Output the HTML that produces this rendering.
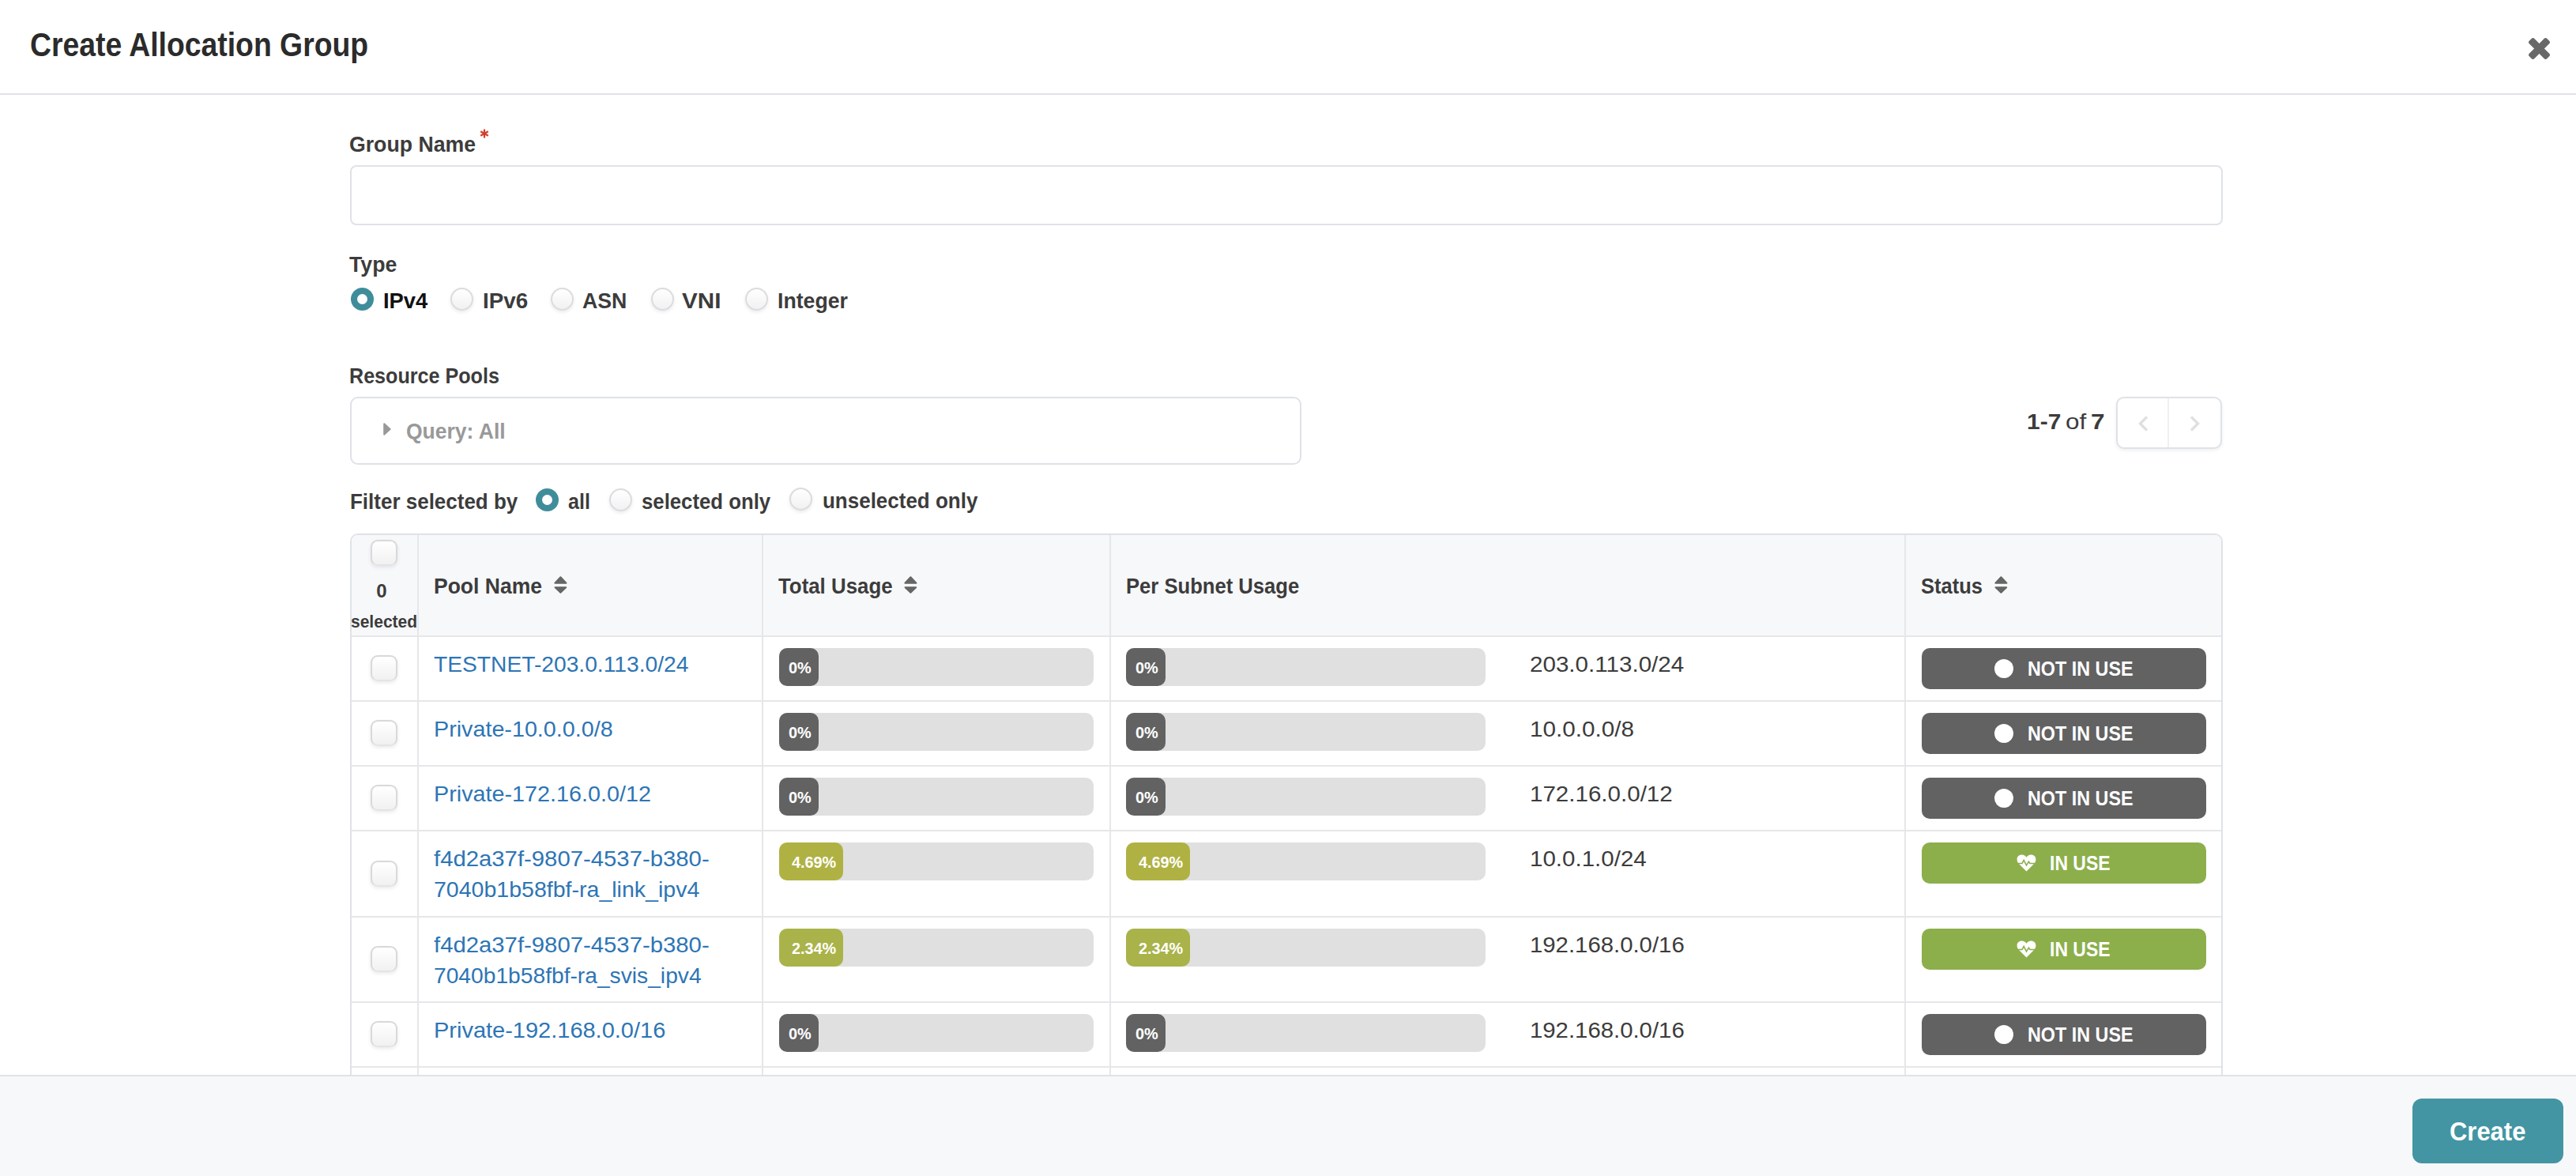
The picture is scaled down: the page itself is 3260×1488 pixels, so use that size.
<!DOCTYPE html>
<html><head><meta charset="utf-8"><title>Create Allocation Group</title>
<style>
html,body{margin:0;padding:0}
body{width:3260px;height:1488px;background:#fff;font-family:"Liberation Sans",sans-serif}
#root{position:relative;width:3260px;height:1488px;overflow:hidden;background:#fff}
.t{position:absolute;line-height:1;white-space:nowrap}
.r{position:absolute}
</style></head><body><div id="root">
<div id="t0" class="t" style="left:38.00px;top:35.20px;font-size:43px;font-weight:700;color:#2b2b2b;transform-origin:0 0;transform:scaleX(0.8684);">Create Allocation Group</div>
<svg class="r" style="left:3199.5px;top:47.5px" width="27" height="27" viewBox="0 0 27 27"><g fill="#686868" transform="rotate(45 13.5 13.5)"><rect x="-2.3" y="9" width="31.6" height="9" rx="2.4"/><rect x="9" y="-2.3" width="9" height="31.6" rx="2.4"/></g></svg>
<div class="r" style="left:0px;top:118px;width:3260px;height:2px;background:#dfe2e7"></div>
<div id="t1" class="t" style="left:442.00px;top:169.10px;font-size:28px;font-weight:700;color:#3c3c3c;transform-origin:0 0;transform:scaleX(0.9522);">Group Name</div>
<svg class="r" style="left:607px;top:163px" width="12" height="12" viewBox="0 0 12 12"><g stroke="#d23f2c" stroke-width="2.2" stroke-linecap="butt"><path d="M6 0.5 V11.5"/><path d="M1.2 3.2 L10.8 8.8"/><path d="M10.8 3.2 L1.2 8.8"/></g></svg>
<div class="r" style="left:443px;top:209px;width:2370px;height:76px;box-sizing:border-box;border:2px solid #dfe2e7;border-radius:8px;background:#fff"></div>
<div id="t2" class="t" style="left:442.25px;top:320.85px;font-size:28px;font-weight:700;color:#3c3c3c;transform-origin:0 0;transform:scaleX(0.9529);">Type</div>
<div class="r" style="left:443.5px;top:363.8px;width:29px;height:29px;border-radius:50%;background:#3f8d9b"></div>
<div class="r" style="left:451.5px;top:371.8px;width:13px;height:13px;border-radius:50%;background:#fff"></div>
<div id="t3" class="t" style="left:484.50px;top:366.60px;font-size:28px;font-weight:700;color:#111;transform-origin:0 0;transform:scaleX(0.9776);">IPv4</div>
<div class="r" style="left:569.5px;top:363.8px;width:29px;height:29px;box-sizing:border-box;border-radius:50%;border:2px solid #dcdcdc;background:linear-gradient(#fff,#f1f1f3);box-shadow:0 2px 4px rgba(40,50,80,0.10)"></div>
<div id="t4" class="t" style="left:611.00px;top:366.60px;font-size:28px;font-weight:700;color:#3c3c3c;transform-origin:0 0;transform:scaleX(0.9906);">IPv6</div>
<div class="r" style="left:696.5px;top:363.8px;width:29px;height:29px;box-sizing:border-box;border-radius:50%;border:2px solid #dcdcdc;background:linear-gradient(#fff,#f1f1f3);box-shadow:0 2px 4px rgba(40,50,80,0.10)"></div>
<div id="t5" class="t" style="left:737.25px;top:366.60px;font-size:28px;font-weight:700;color:#3c3c3c;transform-origin:0 0;transform:scaleX(0.9543);">ASN</div>
<div class="r" style="left:823.5px;top:363.8px;width:29px;height:29px;box-sizing:border-box;border-radius:50%;border:2px solid #dcdcdc;background:linear-gradient(#fff,#f1f1f3);box-shadow:0 2px 4px rgba(40,50,80,0.10)"></div>
<div id="t6" class="t" style="left:863.00px;top:366.60px;font-size:28px;font-weight:700;color:#3c3c3c;transform-origin:0 0;transform:scaleX(1.058);">VNI</div>
<div class="r" style="left:942.5px;top:363.8px;width:29px;height:29px;box-sizing:border-box;border-radius:50%;border:2px solid #dcdcdc;background:linear-gradient(#fff,#f1f1f3);box-shadow:0 2px 4px rgba(40,50,80,0.10)"></div>
<div id="t7" class="t" style="left:984.20px;top:366.80px;font-size:28px;font-weight:700;color:#3c3c3c;transform-origin:0 0;transform:scaleX(0.9518);">Integer</div>
<div id="t8" class="t" style="left:442.25px;top:462.10px;font-size:28px;font-weight:700;color:#3c3c3c;transform-origin:0 0;transform:scaleX(0.8974);">Resource Pools</div>
<div class="r" style="left:443px;top:502px;width:1204px;height:86px;box-sizing:border-box;border:2px solid #dfe2e7;border-radius:10px;background:#fff"></div>
<svg class="r" style="left:485px;top:535px" width="10" height="16" viewBox="0 0 10 16"><path d="M1.2 1.2 L8.6 8 L1.2 14.8 Z" fill="#999" stroke="#999" stroke-width="2" stroke-linejoin="round"/></svg>
<div id="t9" class="t" style="left:514.25px;top:532.10px;font-size:28px;font-weight:700;color:#999;transform-origin:0 0;transform:scaleX(0.9464);">Query: All</div>
<div id="t10" class="t" style="left:2564.75px;top:520.10px;font-size:28px;font-weight:700;color:#3c3c3c;transform-origin:0 0;transform:scaleX(1.0695);">1-7</div>
<div id="t11" class="t" style="left:2614.10px;top:520.10px;font-size:28px;font-weight:400;color:#3c3c3c;transform-origin:0 0;transform:scaleX(1.1253);">of</div>
<div id="t12" class="t" style="left:2646.25px;top:520.10px;font-size:28px;font-weight:700;color:#3c3c3c;transform-origin:0 0;transform:scaleX(1.125);">7</div>
<div class="r" style="left:2678px;top:502px;width:134px;height:66px;box-sizing:border-box;border:2px solid #dfe2e7;border-radius:10px;background:#fff;box-shadow:0 2px 4px rgba(40,50,80,0.08)"></div>
<div class="r" style="left:2743px;top:504px;width:2px;height:62px;background:#f0f0f0"></div>
<svg class="r" style="left:2703px;top:524px" width="18" height="24" viewBox="0 0 18 24"><path d="M14 3.5 L5.5 12 L14 20.5" fill="none" stroke="#e0e0e0" stroke-width="3.4" stroke-linecap="butt" stroke-linejoin="miter"/></svg>
<svg class="r" style="left:2769px;top:524px" width="18" height="24" viewBox="0 0 18 24"><path d="M4 3.5 L12.5 12 L4 20.5" fill="none" stroke="#e0e0e0" stroke-width="3.4" stroke-linecap="butt" stroke-linejoin="miter"/></svg>
<div id="t13" class="t" style="left:442.75px;top:620.85px;font-size:28px;font-weight:700;color:#3c3c3c;transform-origin:0 0;transform:scaleX(0.928);">Filter selected by</div>
<div class="r" style="left:678.25px;top:617.5px;width:29px;height:29px;border-radius:50%;background:#3f8d9b"></div>
<div class="r" style="left:686.25px;top:625.5px;width:13px;height:13px;border-radius:50%;background:#fff"></div>
<div id="t14" class="t" style="left:719.25px;top:620.60px;font-size:28px;font-weight:700;color:#3c3c3c;transform-origin:0 0;transform:scaleX(0.8943);">all</div>
<div class="r" style="left:770.75px;top:617.5px;width:29px;height:29px;box-sizing:border-box;border-radius:50%;border:2px solid #dcdcdc;background:linear-gradient(#fff,#f1f1f3);box-shadow:0 2px 4px rgba(40,50,80,0.10)"></div>
<div id="t15" class="t" style="left:811.50px;top:620.60px;font-size:28px;font-weight:700;color:#3c3c3c;transform-origin:0 0;transform:scaleX(0.9194);">selected only</div>
<div class="r" style="left:999.2px;top:617.0px;width:29px;height:29px;box-sizing:border-box;border-radius:50%;border:2px solid #dcdcdc;background:linear-gradient(#fff,#f1f1f3);box-shadow:0 2px 4px rgba(40,50,80,0.10)"></div>
<div id="t16" class="t" style="left:1040.50px;top:620.10px;font-size:28px;font-weight:700;color:#3c3c3c;transform-origin:0 0;transform:scaleX(0.9278);">unselected only</div>
<div class="r" style="left:443px;top:675px;width:2370px;height:705px;box-sizing:border-box;border:2px solid #dfe2e7;border-radius:10px 10px 0 0;background:#fff;overflow:hidden"><div style="position:absolute;left:0;top:0;right:0;height:127px;background:#f7f8fa"></div></div>
<div class="r" style="left:445px;top:804px;width:2366px;height:2px;background:#e6e7e9"></div>
<div class="r" style="left:445px;top:886px;width:2366px;height:2px;background:#e6e7e9"></div>
<div class="r" style="left:445px;top:968px;width:2366px;height:2px;background:#e6e7e9"></div>
<div class="r" style="left:445px;top:1050px;width:2366px;height:2px;background:#e6e7e9"></div>
<div class="r" style="left:445px;top:1159px;width:2366px;height:2px;background:#e6e7e9"></div>
<div class="r" style="left:445px;top:1267px;width:2366px;height:2px;background:#e6e7e9"></div>
<div class="r" style="left:445px;top:1349px;width:2366px;height:2px;background:#e6e7e9"></div>
<div class="r" style="left:527.75px;top:677px;width:2px;height:685px;background:#e6e7e9"></div>
<div class="r" style="left:964px;top:677px;width:2px;height:685px;background:#e6e7e9"></div>
<div class="r" style="left:1404px;top:677px;width:2px;height:685px;background:#e6e7e9"></div>
<div class="r" style="left:2410px;top:677px;width:2px;height:685px;background:#e6e7e9"></div>
<div class="r" style="left:469px;top:682.7px;width:34px;height:33px;box-sizing:border-box;border-radius:9px;border:2px solid #d9d9d9;border-bottom-color:#e4e4e4;background:linear-gradient(#fff,#f1f1f2);box-shadow:0 2px 4px rgba(40,50,90,0.10)"></div>
<div id="t17" class="t" style="left:476.30px;top:735.98px;font-size:24px;font-weight:700;color:#3c3c3c;">0</div>
<div id="t18" class="t" style="left:443.50px;top:777.10px;font-size:21.5px;font-weight:700;color:#3c3c3c;transform-origin:0 0;transform:scaleX(0.9774);">selected</div>
<div id="t19" class="t" style="left:549.00px;top:728.10px;font-size:28px;font-weight:700;color:#3c3c3c;transform-origin:0 0;transform:scaleX(0.9467);">Pool Name</div>
<svg class="r" style="left:700.5px;top:729px" width="17" height="22" viewBox="0 0 17 22"><path d="M1.4 8.7 L8.4 1.2 L15.4 8.7 Z M1.6 14.3 L15.2 14.3 L8.4 20.8 Z" fill="#666" stroke="#666" stroke-width="2" stroke-linejoin="round"/></svg>
<div id="t20" class="t" style="left:984.50px;top:728.10px;font-size:28px;font-weight:700;color:#3c3c3c;transform-origin:0 0;transform:scaleX(0.9228);">Total Usage</div>
<svg class="r" style="left:1143.5px;top:729px" width="17" height="22" viewBox="0 0 17 22"><path d="M1.4 8.7 L8.4 1.2 L15.4 8.7 Z M1.6 14.3 L15.2 14.3 L8.4 20.8 Z" fill="#666" stroke="#666" stroke-width="2" stroke-linejoin="round"/></svg>
<div id="t21" class="t" style="left:1424.70px;top:728.10px;font-size:28px;font-weight:700;color:#3c3c3c;transform-origin:0 0;transform:scaleX(0.9149);">Per Subnet Usage</div>
<div id="t22" class="t" style="left:2430.75px;top:728.10px;font-size:28px;font-weight:700;color:#3c3c3c;transform-origin:0 0;transform:scaleX(0.9118);">Status</div>
<svg class="r" style="left:2523.5px;top:729px" width="17" height="22" viewBox="0 0 17 22"><path d="M1.4 8.7 L8.4 1.2 L15.4 8.7 Z M1.6 14.3 L15.2 14.3 L8.4 20.8 Z" fill="#666" stroke="#666" stroke-width="2" stroke-linejoin="round"/></svg>
<div class="r" style="left:469px;top:829.0px;width:34px;height:33px;box-sizing:border-box;border-radius:9px;border:2px solid #d9d9d9;border-bottom-color:#e4e4e4;background:linear-gradient(#fff,#f1f1f2);box-shadow:0 2px 4px rgba(40,50,90,0.10)"></div>
<div id="t23" class="t" style="left:549.00px;top:827.10px;font-size:28px;font-weight:400;color:#2d75b5;transform-origin:0 0;transform:scaleX(1.007);">TESTNET-203.0.113.0/24</div>
<div class="r" style="left:986px;top:820px;width:398px;height:48px;background:#e0e0e0;border-radius:10px"></div>
<div class="r" style="left:986px;top:820px;width:50px;height:48px;background:#626262;border-radius:10px"></div>
<div id="t24" class="t" style="left:997.50px;top:834.95px;font-size:20.5px;font-weight:700;color:#fff;transform-origin:0 0;transform:scaleX(0.9694);">0%</div>
<div class="r" style="left:1425px;top:820px;width:455px;height:48px;background:#e0e0e0;border-radius:10px"></div>
<div class="r" style="left:1425px;top:820px;width:50px;height:48px;background:#626262;border-radius:10px"></div>
<div id="t25" class="t" style="left:1436.50px;top:834.95px;font-size:20.5px;font-weight:700;color:#fff;transform-origin:0 0;transform:scaleX(0.9694);">0%</div>
<div id="t26" class="t" style="left:1936.00px;top:826.70px;font-size:28px;font-weight:400;color:#3c3c3c;transform-origin:0 0;transform:scaleX(1.0568);">203.0.113.0/24</div>
<div class="r" style="left:2432px;top:820px;width:360px;height:52px;background:#626262;border-radius:10px"></div>
<div class="r" style="left:2524px;top:834px;width:24px;height:24px;background:#fff;border-radius:50%"></div>
<div id="t27" class="t" style="left:2565.50px;top:833.39px;font-size:26px;font-weight:700;color:#fff;transform-origin:0 0;transform:scaleX(0.8979);">NOT IN USE</div>
<div class="r" style="left:469px;top:911.0px;width:34px;height:33px;box-sizing:border-box;border-radius:9px;border:2px solid #d9d9d9;border-bottom-color:#e4e4e4;background:linear-gradient(#fff,#f1f1f2);box-shadow:0 2px 4px rgba(40,50,90,0.10)"></div>
<div id="t28" class="t" style="left:549.00px;top:909.10px;font-size:28px;font-weight:400;color:#2d75b5;transform-origin:0 0;transform:scaleX(1.0254);">Private-10.0.0.0/8</div>
<div class="r" style="left:986px;top:902px;width:398px;height:48px;background:#e0e0e0;border-radius:10px"></div>
<div class="r" style="left:986px;top:902px;width:50px;height:48px;background:#626262;border-radius:10px"></div>
<div id="t29" class="t" style="left:997.50px;top:916.95px;font-size:20.5px;font-weight:700;color:#fff;transform-origin:0 0;transform:scaleX(0.9694);">0%</div>
<div class="r" style="left:1425px;top:902px;width:455px;height:48px;background:#e0e0e0;border-radius:10px"></div>
<div class="r" style="left:1425px;top:902px;width:50px;height:48px;background:#626262;border-radius:10px"></div>
<div id="t30" class="t" style="left:1436.50px;top:916.95px;font-size:20.5px;font-weight:700;color:#fff;transform-origin:0 0;transform:scaleX(0.9694);">0%</div>
<div id="t31" class="t" style="left:1936.00px;top:908.70px;font-size:28px;font-weight:400;color:#3c3c3c;transform-origin:0 0;transform:scaleX(1.06);">10.0.0.0/8</div>
<div class="r" style="left:2432px;top:902px;width:360px;height:52px;background:#626262;border-radius:10px"></div>
<div class="r" style="left:2524px;top:916px;width:24px;height:24px;background:#fff;border-radius:50%"></div>
<div id="t32" class="t" style="left:2565.50px;top:915.39px;font-size:26px;font-weight:700;color:#fff;transform-origin:0 0;transform:scaleX(0.8979);">NOT IN USE</div>
<div class="r" style="left:469px;top:993.0px;width:34px;height:33px;box-sizing:border-box;border-radius:9px;border:2px solid #d9d9d9;border-bottom-color:#e4e4e4;background:linear-gradient(#fff,#f1f1f2);box-shadow:0 2px 4px rgba(40,50,90,0.10)"></div>
<div id="t33" class="t" style="left:549.00px;top:991.10px;font-size:28px;font-weight:400;color:#2d75b5;transform-origin:0 0;transform:scaleX(1.0267);">Private-172.16.0.0/12</div>
<div class="r" style="left:986px;top:984px;width:398px;height:48px;background:#e0e0e0;border-radius:10px"></div>
<div class="r" style="left:986px;top:984px;width:50px;height:48px;background:#626262;border-radius:10px"></div>
<div id="t34" class="t" style="left:997.50px;top:998.95px;font-size:20.5px;font-weight:700;color:#fff;transform-origin:0 0;transform:scaleX(0.9694);">0%</div>
<div class="r" style="left:1425px;top:984px;width:455px;height:48px;background:#e0e0e0;border-radius:10px"></div>
<div class="r" style="left:1425px;top:984px;width:50px;height:48px;background:#626262;border-radius:10px"></div>
<div id="t35" class="t" style="left:1436.50px;top:998.95px;font-size:20.5px;font-weight:700;color:#fff;transform-origin:0 0;transform:scaleX(0.9694);">0%</div>
<div id="t36" class="t" style="left:1936.00px;top:990.70px;font-size:28px;font-weight:400;color:#3c3c3c;transform-origin:0 0;transform:scaleX(1.0552);">172.16.0.0/12</div>
<div class="r" style="left:2432px;top:984px;width:360px;height:52px;background:#626262;border-radius:10px"></div>
<div class="r" style="left:2524px;top:998px;width:24px;height:24px;background:#fff;border-radius:50%"></div>
<div id="t37" class="t" style="left:2565.50px;top:997.39px;font-size:26px;font-weight:700;color:#fff;transform-origin:0 0;transform:scaleX(0.8979);">NOT IN USE</div>
<div class="r" style="left:469px;top:1088.5px;width:34px;height:33px;box-sizing:border-box;border-radius:9px;border:2px solid #d9d9d9;border-bottom-color:#e4e4e4;background:linear-gradient(#fff,#f1f1f2);box-shadow:0 2px 4px rgba(40,50,90,0.10)"></div>
<div id="t38" class="t" style="left:549.00px;top:1073.10px;font-size:28px;font-weight:400;color:#2d75b5;transform-origin:0 0;transform:scaleX(1.0465);">f4d2a37f-9807-4537-b380-</div>
<div id="t39" class="t" style="left:549.00px;top:1111.60px;font-size:28px;font-weight:400;color:#2d75b5;transform-origin:0 0;transform:scaleX(1.019);">7040b1b58fbf-ra_link_ipv4</div>
<div class="r" style="left:986px;top:1066px;width:398px;height:48px;background:#e0e0e0;border-radius:10px"></div>
<div class="r" style="left:986px;top:1066px;width:81px;height:48px;background:#afb243;border-radius:10px"></div>
<div id="t40" class="t" style="left:1001.50px;top:1080.95px;font-size:20.5px;font-weight:700;color:#fff;transform-origin:0 0;transform:scaleX(0.9672);">4.69%</div>
<div class="r" style="left:1425px;top:1066px;width:455px;height:48px;background:#e0e0e0;border-radius:10px"></div>
<div class="r" style="left:1425px;top:1066px;width:81px;height:48px;background:#afb243;border-radius:10px"></div>
<div id="t41" class="t" style="left:1440.50px;top:1080.95px;font-size:20.5px;font-weight:700;color:#fff;transform-origin:0 0;transform:scaleX(0.9672);">4.69%</div>
<div id="t42" class="t" style="left:1936.00px;top:1072.70px;font-size:28px;font-weight:400;color:#3c3c3c;transform-origin:0 0;transform:scaleX(1.0542);">10.0.1.0/24</div>
<div class="r" style="left:2432px;top:1066px;width:360px;height:52px;background:#8caf4b;border-radius:10px"></div>
<svg class="r" style="left:2552px;top:1081px" width="25" height="22" viewBox="0 0 25 22"><path d="M12.5 21.5 L3 12 C-1 8 0 1.2 6 0.6 C9 0.3 11.3 2 12.5 3.8 C13.7 2 16 0.3 19 0.6 C25 1.2 26 8 22 12 Z" fill="#fff"/><path d="M0 11.5 L7 11.5 L9.2 7.4 L12.5 13.9 L15.4 9.2 L16.9 11.5 L25 11.5" fill="none" stroke="#8caf4b" stroke-width="1.6" stroke-linejoin="miter"/></svg>
<div id="t43" class="t" style="left:2594.10px;top:1078.99px;font-size:26px;font-weight:700;color:#fff;transform-origin:0 0;transform:scaleX(0.8835);">IN USE</div>
<div class="r" style="left:469px;top:1197.0px;width:34px;height:33px;box-sizing:border-box;border-radius:9px;border:2px solid #d9d9d9;border-bottom-color:#e4e4e4;background:linear-gradient(#fff,#f1f1f2);box-shadow:0 2px 4px rgba(40,50,90,0.10)"></div>
<div id="t44" class="t" style="left:549.00px;top:1182.10px;font-size:28px;font-weight:400;color:#2d75b5;transform-origin:0 0;transform:scaleX(1.0465);">f4d2a37f-9807-4537-b380-</div>
<div id="t45" class="t" style="left:549.00px;top:1220.60px;font-size:28px;font-weight:400;color:#2d75b5;transform-origin:0 0;transform:scaleX(1.007);">7040b1b58fbf-ra_svis_ipv4</div>
<div class="r" style="left:986px;top:1175px;width:398px;height:48px;background:#e0e0e0;border-radius:10px"></div>
<div class="r" style="left:986px;top:1175px;width:81px;height:48px;background:#a9b349;border-radius:10px"></div>
<div id="t46" class="t" style="left:1001.50px;top:1189.95px;font-size:20.5px;font-weight:700;color:#fff;transform-origin:0 0;transform:scaleX(0.9672);">2.34%</div>
<div class="r" style="left:1425px;top:1175px;width:455px;height:48px;background:#e0e0e0;border-radius:10px"></div>
<div class="r" style="left:1425px;top:1175px;width:81px;height:48px;background:#a9b349;border-radius:10px"></div>
<div id="t47" class="t" style="left:1440.50px;top:1189.95px;font-size:20.5px;font-weight:700;color:#fff;transform-origin:0 0;transform:scaleX(0.9672);">2.34%</div>
<div id="t48" class="t" style="left:1936.00px;top:1181.70px;font-size:28px;font-weight:400;color:#3c3c3c;transform-origin:0 0;transform:scaleX(1.0474);">192.168.0.0/16</div>
<div class="r" style="left:2432px;top:1175px;width:360px;height:52px;background:#8caf4b;border-radius:10px"></div>
<svg class="r" style="left:2552px;top:1190px" width="25" height="22" viewBox="0 0 25 22"><path d="M12.5 21.5 L3 12 C-1 8 0 1.2 6 0.6 C9 0.3 11.3 2 12.5 3.8 C13.7 2 16 0.3 19 0.6 C25 1.2 26 8 22 12 Z" fill="#fff"/><path d="M0 11.5 L7 11.5 L9.2 7.4 L12.5 13.9 L15.4 9.2 L16.9 11.5 L25 11.5" fill="none" stroke="#8caf4b" stroke-width="1.6" stroke-linejoin="miter"/></svg>
<div id="t49" class="t" style="left:2594.10px;top:1187.99px;font-size:26px;font-weight:700;color:#fff;transform-origin:0 0;transform:scaleX(0.8835);">IN USE</div>
<div class="r" style="left:469px;top:1292.0px;width:34px;height:33px;box-sizing:border-box;border-radius:9px;border:2px solid #d9d9d9;border-bottom-color:#e4e4e4;background:linear-gradient(#fff,#f1f1f2);box-shadow:0 2px 4px rgba(40,50,90,0.10)"></div>
<div id="t50" class="t" style="left:549.00px;top:1290.10px;font-size:28px;font-weight:400;color:#2d75b5;transform-origin:0 0;transform:scaleX(1.0351);">Private-192.168.0.0/16</div>
<div class="r" style="left:986px;top:1283px;width:398px;height:48px;background:#e0e0e0;border-radius:10px"></div>
<div class="r" style="left:986px;top:1283px;width:50px;height:48px;background:#626262;border-radius:10px"></div>
<div id="t51" class="t" style="left:997.50px;top:1297.95px;font-size:20.5px;font-weight:700;color:#fff;transform-origin:0 0;transform:scaleX(0.9694);">0%</div>
<div class="r" style="left:1425px;top:1283px;width:455px;height:48px;background:#e0e0e0;border-radius:10px"></div>
<div class="r" style="left:1425px;top:1283px;width:50px;height:48px;background:#626262;border-radius:10px"></div>
<div id="t52" class="t" style="left:1436.50px;top:1297.95px;font-size:20.5px;font-weight:700;color:#fff;transform-origin:0 0;transform:scaleX(0.9694);">0%</div>
<div id="t53" class="t" style="left:1936.00px;top:1289.70px;font-size:28px;font-weight:400;color:#3c3c3c;transform-origin:0 0;transform:scaleX(1.0474);">192.168.0.0/16</div>
<div class="r" style="left:2432px;top:1283px;width:360px;height:52px;background:#626262;border-radius:10px"></div>
<div class="r" style="left:2524px;top:1297px;width:24px;height:24px;background:#fff;border-radius:50%"></div>
<div id="t54" class="t" style="left:2565.50px;top:1296.39px;font-size:26px;font-weight:700;color:#fff;transform-origin:0 0;transform:scaleX(0.8979);">NOT IN USE</div>
<div class="r" style="left:469px;top:1373.5px;width:34px;height:33px;box-sizing:border-box;border-radius:9px;border:2px solid #d9d9d9;border-bottom-color:#e4e4e4;background:linear-gradient(#fff,#f1f1f2);box-shadow:0 2px 4px rgba(40,50,90,0.10)"></div>
<div class="r" style="left:0;top:1360px;width:3260px;height:128px;background:#f7f8fa;border-top:2px solid #dfe2e7;box-sizing:border-box"></div>
<div class="r" style="left:3053px;top:1390px;width:191px;height:82px;background:#4395a3;border-radius:12px"></div>
<div id="t55" class="t" style="left:3099.90px;top:1414.22px;font-size:34px;font-weight:700;color:#fff;transform-origin:0 0;transform:scaleX(0.9103);">Create</div>
</div></body></html>
